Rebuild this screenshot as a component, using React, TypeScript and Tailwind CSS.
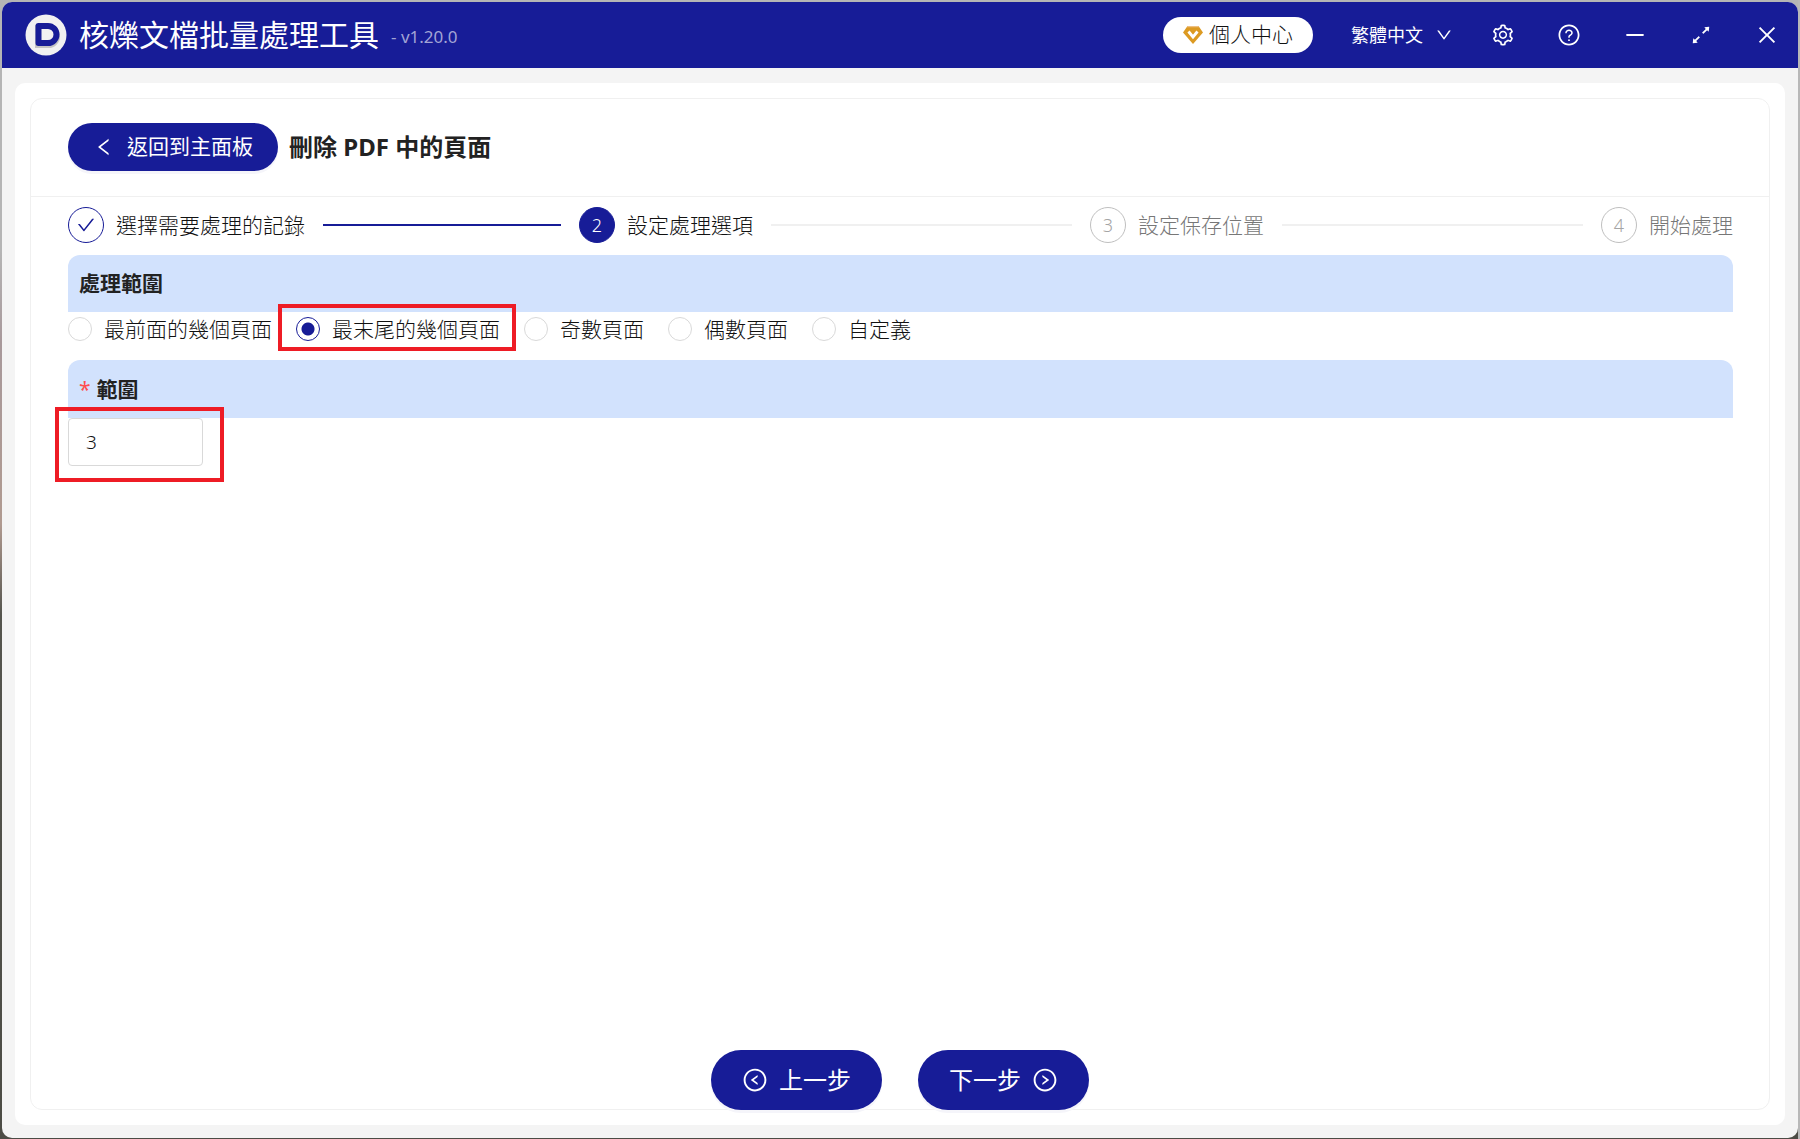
import {
  AiOutlineArrowsAlt,
  AiOutlineCheck,
  AiOutlineClose,
  AiOutlineDown,
  AiOutlineLeft,
  AiOutlineLeftCircle,
  AiOutlineMinus,
  AiOutlineQuestionCircle,
  AiOutlineRightCircle,
  AiOutlineSetting,
} from "react-icons/ai";
import clsx from "clsx";

const steps = [
  { title: "選擇需要處理的記錄", status: "finish" },
  { title: "設定處理選項", status: "process" },
  { title: "設定保存位置", status: "wait" },
  { title: "開始處理", status: "wait" },
];

const ranges = ["最前面的幾個頁面", "最末尾的幾個頁面", "奇數頁面", "偶數頁面", "自定義"];

const windowActions = [
  { label: "設定", icon: AiOutlineSetting },
  { label: "說明", icon: AiOutlineQuestionCircle },
  { label: "最小化", icon: AiOutlineMinus },
  { label: "最大化", icon: AiOutlineArrowsAlt },
  { label: "關閉", icon: AiOutlineClose },
];

function Logo() {
  return (
    <svg viewBox="0 0 42 42" className="size-[42px]" aria-hidden="true">
      <circle cx="21" cy="21" r="20.5" fill="#f1f1f1" />
      <path
        d="M13 14h10.500a8.500 8.500 0 0 1 0 17H13z"
        fill="none"
        stroke="#a5a5a5"
        strokeWidth="6"
        opacity="0.6"
      />
      <path
        d="M13.500 12h9.500a8.500 8.500 0 0 1 0 17h-9.500z"
        fill="#f1f1f1"
        stroke="#171c97"
        strokeWidth="6"
        strokeLinejoin="round"
      />
    </svg>
  );
}

function Diamond() {
  return (
    <svg viewBox="0 0 20 20" className="size-5" aria-hidden="true">
      <path d="M4.500 1h11L20 7.500 10 19 0 7.500z" fill="#dc9a22" />
      <path d="M4.500 1h11l.8 1.200H3.700z" fill="#eec083" />
      <path d="M5.500 6.500 10 12l4.500-5.500" fill="none" stroke="#fff" strokeWidth="2.800" />
    </svg>
  );
}

function Header() {
  return (
    <header className="flex h-[66px] items-center bg-[#171c97] pb-px pl-[23px] pr-[19px] text-white">
      <Logo />
      <h1 className="ml-3 text-[30px] leading-10">核爍文檔批量處理工具</h1>
      <span className="ml-3 pt-1 text-[17px] text-[#a2a4d5]">- v1.20.0</span>
      <button className="ml-auto flex h-9 w-[150px] items-center justify-center gap-1.5 rounded-full bg-white text-[21px] font-light text-[#111]">
        <Diamond />
        個人中心
      </button>
      <button className="ml-[38px] flex items-center gap-3 text-lg">
        繁體中文
        <AiOutlineDown className="size-[18px]" />
      </button>
      <div className="ml-[38px] flex gap-[42px]">
        {windowActions.map(({ label, icon: Icon }) => (
          <button key={label} aria-label={label}>
            <Icon className="size-6" />
          </button>
        ))}
      </div>
    </header>
  );
}

function Steps() {
  return (
    <ol className="flex pt-2.5">
      {steps.map((step, i) => (
        <li
          key={step.title}
          className={clsx("flex items-center", i < steps.length - 1 && "flex-1 pr-[18px]")}
        >
          <span
            className={clsx(
              "mr-3 flex size-9 shrink-0 items-center justify-center rounded-full border text-lg font-light",
              step.status === "finish" && "border-[#171c97] text-[#171c97]",
              step.status === "process" && "border-[#171c97] bg-[#171c97] text-white",
              step.status === "wait" && "border-[#bfbfbf] text-[#a5a5a5]"
            )}
          >
            {step.status === "finish" ? <AiOutlineCheck className="size-5" /> : i + 1}
          </span>
          <span
            className={clsx(
              "shrink-0 text-[21px] font-light leading-9",
              step.status === "wait" ? "text-[#777]" : "text-[#111]"
            )}
          >
            {step.title}
          </span>
          {i < steps.length - 1 && (
            <span
              className={clsx(
                "ml-[18px] h-0.5 flex-1",
                step.status === "finish" ? "bg-[#171c97]" : "bg-[#f0f0f0]"
              )}
            />
          )}
        </li>
      ))}
    </ol>
  );
}

function RangeOptions() {
  return (
    <div className="flex gap-6" role="radiogroup" aria-label="處理範圍">
      {ranges.map((label, i) => (
        <label
          key={label}
          className="relative flex items-center gap-3 text-[21px] font-light leading-[34px] text-[#111]"
        >
          <input
            type="radio"
            name="range"
            defaultChecked={i === 1}
            className="size-6 appearance-none rounded-full border border-[#d9d9d9] bg-white checked:border-[#171c97] checked:bg-[radial-gradient(circle,#171c97_6px,#fff_7px)]"
          />
          {label}
          {i === 1 && (
            <span className="pointer-events-none absolute -bottom-[5px] -left-[18px] -right-4 -top-2 border-4 border-[#ee1c25]" />
          )}
        </label>
      ))}
    </div>
  );
}

export default function App() {
  return (
    <div className="flex min-h-screen flex-col border-r-2 border-[#b8b8b8] bg-[linear-gradient(#b5b5b5_22%,#a8999b_30%,#b09a90_46%,#55554e_54%,#4c4c45)] pb-px pl-0.5 pt-0.5 font-['Noto_Sans','Noto_Sans_CJK_TC',sans-serif] text-[#222]">
      <div className="flex flex-1 flex-col overflow-hidden rounded-[10px] bg-[#f4f4f4]">
        <Header />
        <main className="mx-[13px] mb-[13px] mt-[15px] flex flex-1 flex-col rounded-[10px] bg-white p-[15px]">
          <section className="flex flex-1 flex-col rounded-xl border border-[#f0f0f0]">
            <div className="flex h-[98px] items-center gap-[11px] border-b border-[#f0f0f0] px-[37px] pb-px">
              <button className="flex h-12 w-[210px] items-center justify-center gap-3 rounded-full bg-[#171c97] text-[21px] text-white shadow-[0_3px_0_#f5f5fa]">
                <AiOutlineLeft className="size-[22px]" />
                返回到主面板
              </button>
              <h2 className="text-2xl font-bold">刪除 PDF 中的頁面</h2>
            </div>
            <div className="pl-[37px] pr-9">
              <Steps />
              <h3 className="mt-3 rounded-t-xl bg-[#d2e2fd] px-[11px] text-[21px] font-bold leading-[57px]">
                處理範圍
              </h3>
              <RangeOptions />
              <h3 className="mt-3.5 rounded-t-xl bg-[#d2e2fd] px-[11px] text-[21px] font-bold leading-[58px]">
                <label htmlFor="page-count">
                  <span className="mr-1.5 font-normal text-[#ff4d4f]">*</span>
                  範圍
                </label>
              </h3>
              <div className="relative w-[135px]">
                <input
                  id="page-count"
                  type="text"
                  inputMode="numeric"
                  defaultValue="3"
                  className="block h-12 w-full rounded-sm border border-[#d9d9d9] bg-white px-[17px] text-[19px] font-light text-[#111]"
                />
                <span className="pointer-events-none absolute -bottom-4 -left-[13px] -right-[21px] -top-[11px] border-4 border-[#ee1c25]" />
              </div>
            </div>
            <div className="-mb-px mt-auto flex justify-center gap-9">
              <button className="flex h-[60px] w-[171px] items-center justify-center gap-[11px] rounded-full bg-[#171c97] text-2xl text-white shadow-[0_3px_0_#f5f5fa]">
                <AiOutlineLeftCircle className="size-[26px]" />
                上一步
              </button>
              <button className="flex h-[60px] w-[171px] items-center justify-center gap-[11px] rounded-full bg-[#171c97] text-2xl text-white shadow-[0_3px_0_#f5f5fa]">
                下一步
                <AiOutlineRightCircle className="size-[26px]" />
              </button>
            </div>
          </section>
        </main>
      </div>
    </div>
  );
}
